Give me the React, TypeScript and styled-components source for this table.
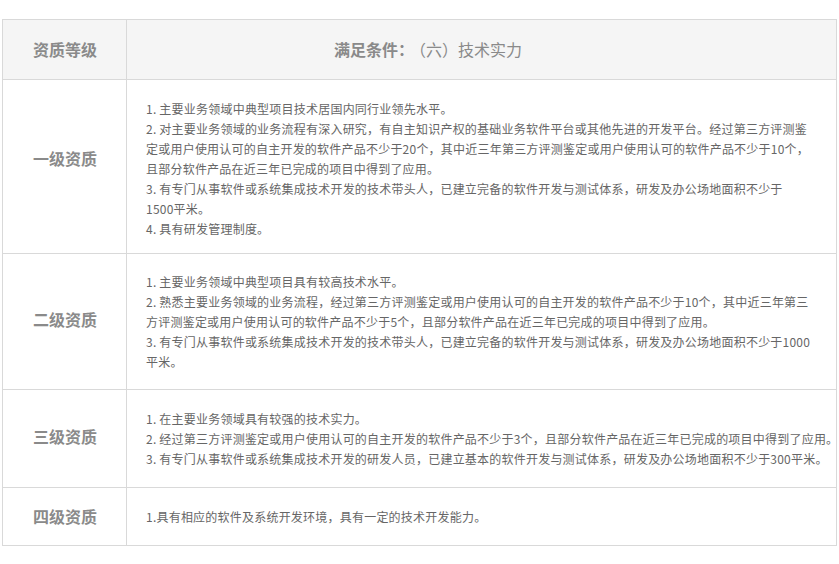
import React from "react";
import styled, { createGlobalStyle } from "styled-components";

const Global = createGlobalStyle`
  html, body { margin: 0; padding: 0; background: #fff; }
  body { font-family: "Noto Sans CJK SC", "Noto Sans", sans-serif; }
`;

const Page = styled.div`
  padding: 19px 0 0 2px;
  width: 839px;
  box-sizing: border-box;
`;

const Table = styled.div`
  display: grid;
  grid-template-columns: 124px 710px;
  border-top: 1px solid #d9d9d9;
  border-left: 1px solid #d9d9d9;
  width: 835px;
  box-sizing: border-box;
`;

const Cell = styled.div<{ $h: number; $head?: boolean; $lift?: number; $drop?: number }>`
  height: ${(p) => p.$h}px;
  box-sizing: border-box;
  border-right: 1px solid #d9d9d9;
  border-bottom: 1px solid #d9d9d9;
  background: ${(p) => (p.$head ? "#f5f5f5" : "#fff")};
  display: flex;
  align-items: center;
  padding-bottom: ${(p) => p.$lift ?? 0}px;
  padding-top: ${(p) => p.$drop ?? 0}px;
`;

const LevelCell = styled(Cell)`
  justify-content: center;
  padding-left: 1px;
  font-size: 16px;
  font-weight: 700;
  color: #8a8a8a;
`;

const HeadCond = styled(Cell)`
  padding-left: 207px;
  font-size: 16px;
  color: #8a8a8a;
`;

const Strong = styled.span`
  font-weight: 700;
  margin-right: -4px;
`;

const Content = styled(Cell)`
  padding-left: 19px;
`;

const Lines = styled.div`
  font-size: 12px;
  line-height: 20px;
  color: #666;
  letter-spacing: 0.22px;
`;

const Line = styled.div`
  white-space: nowrap;
`;

const rows: { level: string; h: number; lift: number; drop: number; lines: string[] }[] = [
  {
    level: "一级资质",
    h: 174,
    lift: 18,
    drop: 4,
    lines: [
      "1. 主要业务领域中典型项目技术居国内同行业领先水平。",
      "2. 对主要业务领域的业务流程有深入研究，有自主知识产权的基础业务软件平台或其他先进的开发平台。经过第三方评测鉴",
      "定或用户使用认可的自主开发的软件产品不少于20个，其中近三年第三方评测鉴定或用户使用认可的软件产品不少于10个，",
      "且部分软件产品在近三年已完成的项目中得到了应用。",
      "3. 有专门从事软件或系统集成技术开发的技术带头人，已建立完备的软件开发与测试体系，研发及办公场地面积不少于",
      "1500平米。",
      "4. 具有研发管理制度。",
    ],
  },
  {
    level: "二级资质",
    h: 136,
    lift: 6,
    drop: 0,
    lines: [
      "1. 主要业务领域中典型项目具有较高技术水平。",
      "2. 熟悉主要业务领域的业务流程，经过第三方评测鉴定或用户使用认可的自主开发的软件产品不少于10个，其中近三年第三",
      "方评测鉴定或用户使用认可的软件产品不少于5个，且部分软件产品在近三年已完成的项目中得到了应用。",
      "3. 有专门从事软件或系统集成技术开发的技术带头人，已建立完备的软件开发与测试体系，研发及办公场地面积不少于1000",
      "平米。",
    ],
  },
  {
    level: "三级资质",
    h: 98,
    lift: 6,
    drop: 0,
    lines: [
      "1. 在主要业务领域具有较强的技术实力。",
      "2. 经过第三方评测鉴定或用户使用认可的自主开发的软件产品不少于3个，且部分软件产品在近三年已完成的项目中得到了应用。",
      "3. 有专门从事软件或系统集成技术开发的研发人员，已建立基本的软件开发与测试体系，研发及办公场地面积不少于300平米。",
    ],
  },
  {
    level: "四级资质",
    h: 58,
    lift: 2,
    drop: 0,
    lines: ["1.具有相应的软件及系统开发环境，具有一定的技术开发能力。"],
  },
];

export default function App() {
  return (
    <>
      <Global />
      <Page>
        <Table>
          <LevelCell $h={60} $head $lift={2}>
            资质等级
          </LevelCell>
          <HeadCond $h={60} $head $lift={2}>
            <Strong>满足条件：</Strong>（六）技术实力
          </HeadCond>
          {rows.map((r) => (
            <React.Fragment key={r.level}>
              <LevelCell $h={r.h} $lift={r.lift}>
                {r.level}
              </LevelCell>
              <Content $h={r.h} $drop={r.drop}>
                <Lines>
                  {r.lines.map((l, i) => (
                    <Line key={i}>{l}</Line>
                  ))}
                </Lines>
              </Content>
            </React.Fragment>
          ))}
        </Table>
      </Page>
    </>
  );
}
